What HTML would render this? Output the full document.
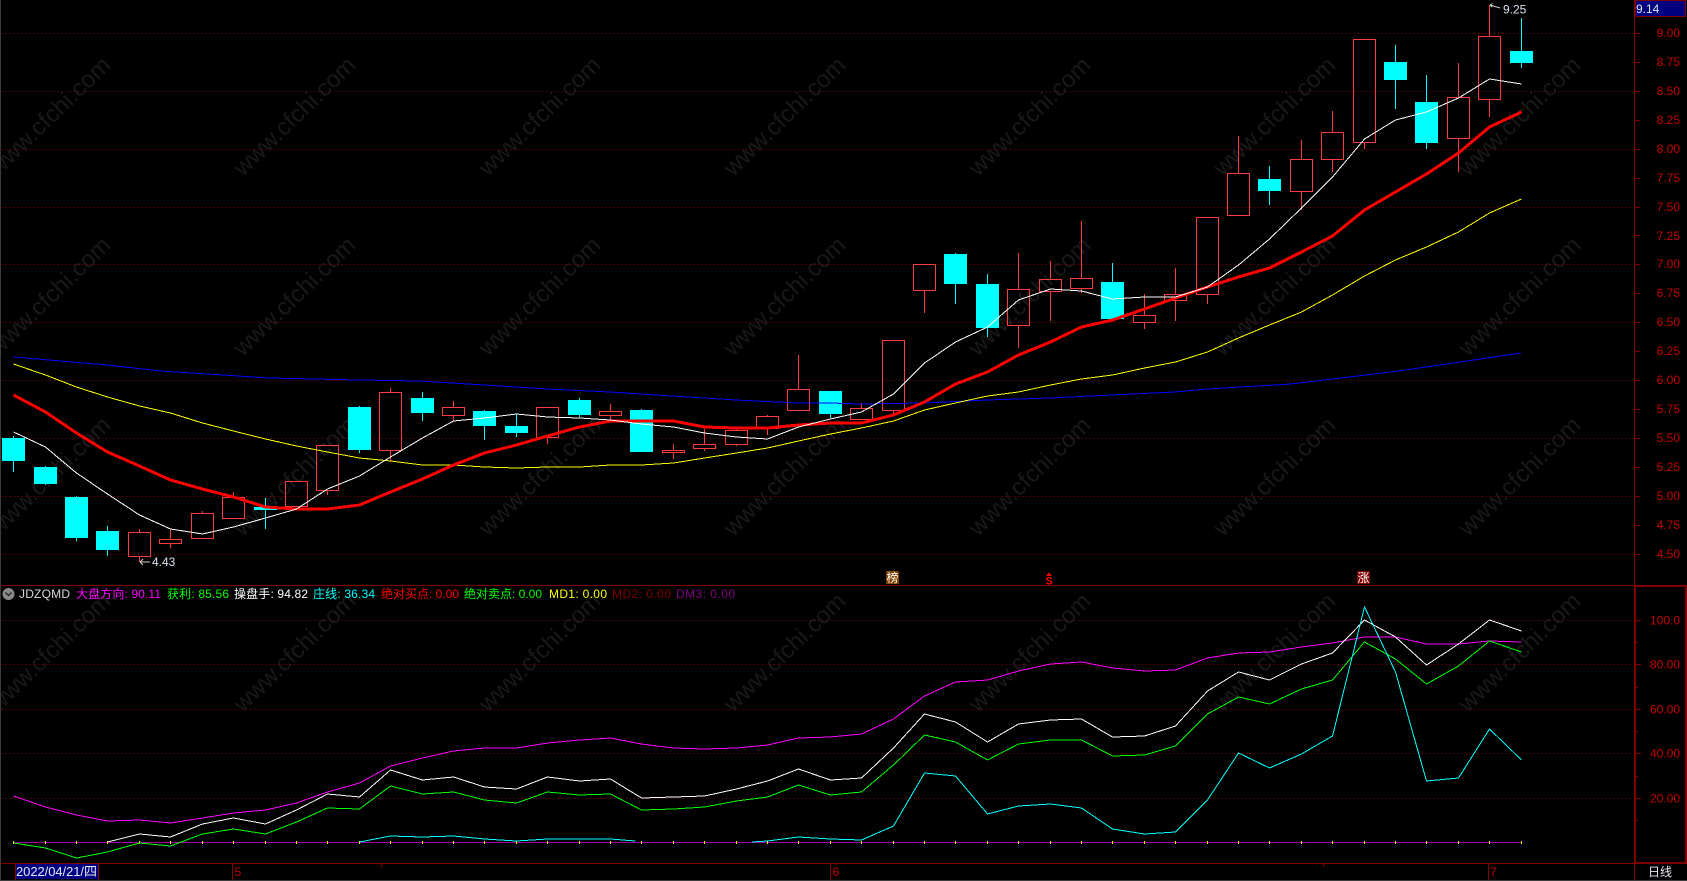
<!DOCTYPE html>
<html>
<head>
<meta charset="utf-8">
<title>JDZQMD</title>
<style>
html,body{margin:0;padding:0;background:#000;width:1687px;height:881px;overflow:hidden}
svg{display:block}
text{font-family:"Liberation Sans","Noto Sans CJK SC",sans-serif}
.wm text{font-size:24px;fill:#191919}
.ax text{font-size:12px;fill:#c40000}
.lg text{font-size:12px}
polyline{shape-rendering:crispEdges}
</style>
</head>
<body>
<svg width="1687" height="881" viewBox="0 0 1687 881" xmlns="http://www.w3.org/2000/svg">
<rect width="1687" height="881" fill="#000"/>

<!-- watermark -->
<g class="wm" text-anchor="middle">
<text transform="translate(55,122) rotate(-44)">www.cfchi.com</text>
<text transform="translate(300,122) rotate(-44)">www.cfchi.com</text>
<text transform="translate(545,122) rotate(-44)">www.cfchi.com</text>
<text transform="translate(790,122) rotate(-44)">www.cfchi.com</text>
<text transform="translate(1035,122) rotate(-44)">www.cfchi.com</text>
<text transform="translate(1280,122) rotate(-44)">www.cfchi.com</text>
<text transform="translate(1525,122) rotate(-44)">www.cfchi.com</text>
<text transform="translate(55,302) rotate(-44)">www.cfchi.com</text>
<text transform="translate(300,302) rotate(-44)">www.cfchi.com</text>
<text transform="translate(545,302) rotate(-44)">www.cfchi.com</text>
<text transform="translate(790,302) rotate(-44)">www.cfchi.com</text>
<text transform="translate(1035,302) rotate(-44)">www.cfchi.com</text>
<text transform="translate(1280,302) rotate(-44)">www.cfchi.com</text>
<text transform="translate(1525,302) rotate(-44)">www.cfchi.com</text>
<text transform="translate(55,482) rotate(-44)">www.cfchi.com</text>
<text transform="translate(300,482) rotate(-44)">www.cfchi.com</text>
<text transform="translate(545,482) rotate(-44)">www.cfchi.com</text>
<text transform="translate(790,482) rotate(-44)">www.cfchi.com</text>
<text transform="translate(1035,482) rotate(-44)">www.cfchi.com</text>
<text transform="translate(1280,482) rotate(-44)">www.cfchi.com</text>
<text transform="translate(1525,482) rotate(-44)">www.cfchi.com</text>
<text transform="translate(55,658) rotate(-44)">www.cfchi.com</text>
<text transform="translate(300,658) rotate(-44)">www.cfchi.com</text>
<text transform="translate(545,658) rotate(-44)">www.cfchi.com</text>
<text transform="translate(790,658) rotate(-44)">www.cfchi.com</text>
<text transform="translate(1035,658) rotate(-44)">www.cfchi.com</text>
<text transform="translate(1280,658) rotate(-44)">www.cfchi.com</text>
<text transform="translate(1525,658) rotate(-44)">www.cfchi.com</text>
</g>

<!-- dotted grid -->
<path d="M2 33.5H1634M2 91.5H1634M2 149.5H1634M2 207.5H1634M2 264.5H1634M2 322.5H1634M2 380.5H1634M2 438.5H1634M2 496.5H1634M2 554.5H1634M2 620.5H1634M2 664.5H1634M2 709.5H1634M2 753.5H1634M2 798.5H1634" stroke="#900000" stroke-width="1" stroke-dasharray="1 3" fill="none" shape-rendering="crispEdges"/>

<!-- frame -->
<g shape-rendering="crispEdges" fill="none" stroke="#800000" stroke-width="1">
<path d="M0 585.5H1687M0 863.5H1687M1634.5 0V881"/>
<rect x="1635" y="586" width="51" height="277" stroke-width="2"/>
<path d="M1635 33.5h5M1635 62.5h5M1635 91.5h5M1635 120.5h5M1635 149.5h5M1635 178.5h5M1635 207.5h5M1635 235.5h5M1635 264.5h5M1635 293.5h5M1635 322.5h5M1635 351.5h5M1635 380.5h5M1635 409.5h5M1635 438.5h5M1635 467.5h5M1635 496.5h5M1635 525.5h5M1635 554.5h5"/>
<path d="M1636 620.5h5M1636 642.5h2M1636 664.5h5M1636 687.5h2M1636 709.5h5M1636 731.5h2M1636 753.5h5M1636 776.5h2M1636 798.5h5M1636 820.5h2"/>
<path d="M15.5 864V880M98.5 864V880M232.5 864V880M830.5 864V880M1488.5 864V880M381.5 864v3M1323.5 864v3"/>
</g>
<path d="M0.5 0V881M0 880.5H1687" stroke="#3c3c3c" stroke-width="1" fill="none" shape-rendering="crispEdges"/>

<!-- cyan candles -->
<path shape-rendering="crispEdges" stroke="#00ffff" stroke-width="1" fill="none" d="M13.5 436V472M45.5 466V485M76.5 496V541M107.5 526V556M265.5 498V529M359.5 406V453M422.5 392V421M484.5 410V440M516.5 414V437M579.5 398V417M641.5 409V452M830.5 391V418M955.5 253V304M987.5 274V337M1112.5 263V320M1269.5 166V205M1395.5 45V109M1426.5 75V149M1521.5 18V68"/>
<path shape-rendering="crispEdges" fill="#00ffff" d="M2 438h23v23h-23zM34 467h23v17h-23zM65 497h23v41h-23zM96 531h23v19h-23zM254 507h23v3h-23zM348 407h23v43h-23zM411 398h23v15h-23zM473 411h23v15h-23zM505 426h23v7h-23zM568 400h23v15h-23zM630 410h23v42h-23zM819 391h23v23h-23zM944 254h23v30h-23zM976 284h23v44h-23zM1101 282h23v37h-23zM1258 179h23v12h-23zM1384 62h23v18h-23zM1415 102h23v41h-23zM1510 51h23v12h-23z"/>

<!-- red candles -->
<path shape-rendering="crispEdges" stroke="#ff3c3c" stroke-width="1" fill="none" d="M139.5 529V532M139.5 557V562M170.5 529V539M170.5 544V548M202.5 511V513M233.5 492V497M327.5 491V495M390.5 388V392M390.5 451V461M453.5 401V407M453.5 416V421M547.5 438V444M610.5 404V411M610.5 416V421M673.5 444V450M673.5 453V459M704.5 429V444M704.5 449V451M736.5 429V430M736.5 445V446M767.5 415V416M767.5 429V435M798.5 355V389M861.5 403V408M893.5 411V415M924.5 291V313M1018.5 253V289M1018.5 326V348M1050.5 261V279M1050.5 292V321M1081.5 221V278M1081.5 289V293M1144.5 294V315M1144.5 323V329M1175.5 268V294M1175.5 301V321M1207.5 295V304M1238.5 136V173M1301.5 140V159M1301.5 192V210M1332.5 111V132M1332.5 160V172M1364.5 143V149M1458.5 63V97M1458.5 139V172M1489.5 5V36M1489.5 100V117"/>
<path shape-rendering="crispEdges" stroke="#ff3c3c" stroke-width="1" fill="none" d="M128.5 532.5h22v24h-22zM159.5 539.5h22v4h-22zM191.5 513.5h22v25h-22zM222.5 497.5h22v21h-22zM285.5 481.5h22v25h-22zM316.5 445.5h22v45h-22zM379.5 392.5h22v58h-22zM442.5 407.5h22v8h-22zM536.5 407.5h22v30h-22zM599.5 411.5h22v4h-22zM662.5 450.5h22v2h-22zM693.5 444.5h22v4h-22zM725.5 430.5h22v14h-22zM756.5 416.5h22v12h-22zM787.5 389.5h22v21h-22zM850.5 408.5h22v11h-22zM882.5 340.5h22v70h-22zM913.5 264.5h22v26h-22zM1007.5 289.5h22v36h-22zM1039.5 279.5h22v12h-22zM1070.5 278.5h22v10h-22zM1133.5 315.5h22v7h-22zM1164.5 294.5h22v6h-22zM1196.5 217.5h22v77h-22zM1227.5 173.5h22v42h-22zM1290.5 159.5h22v32h-22zM1321.5 132.5h22v27h-22zM1353.5 39.5h22v103h-22zM1447.5 97.5h22v41h-22zM1478.5 36.5h22v63h-22z"/>

<!-- moving averages, upper pane -->
<polyline fill="none" stroke="#0000ff" stroke-width="1" points="13.5,357 107,365 161,371 269,378 359,380 420,381 484,385 547,389 610,392 673,396 736,400 798,403 830,403 861,404 924,403 987,400 1050,398 1112,395 1175,392 1207,389 1291,384 1399,371 1521,353"/>
<polyline fill="none" stroke="#ffff00" stroke-width="1" points="13.5,364 45.5,375 76.5,387 107.5,397 139.5,406 170.5,413 202.5,423 233.5,431 265.5,439 296.5,446 327.5,452 359.5,458 390.5,461 422.5,465 453.5,465 484.5,467 516.5,468 547.5,467 579.5,467 610.5,465 641.5,465 673.5,463 704.5,458 736.5,453 767.5,448 798.5,441 830.5,434 861.5,428 893.5,421 924.5,410 955.5,403 987.5,396 1018.5,392 1050.5,385 1081.5,379 1112.5,375 1144.5,368 1175.5,362 1207.5,352 1238.5,338 1269.5,325 1301.5,312 1332.5,295 1364.5,276 1395.5,260 1426.5,247 1458.5,232 1489.5,213 1521.5,199"/>
<polyline fill="none" stroke="#ff0000" stroke-width="3" points="13.5,395 45.5,412 76.5,433 107.5,452 139.5,466 170.5,480 202.5,489 233.5,497 265.5,507 296.5,509 327.5,509 359.5,505 390.5,492 422.5,479 453.5,465 484.5,453 516.5,445 547.5,436 579.5,427 610.5,421 641.5,421 673.5,421 704.5,427 736.5,428 767.5,428 798.5,425 830.5,423 861.5,423 893.5,415 924.5,402 955.5,384 987.5,372 1018.5,355 1050.5,342 1081.5,327 1112.5,320 1144.5,309 1175.5,298 1207.5,287 1238.5,277 1269.5,268 1301.5,252 1332.5,236 1364.5,210 1395.5,192 1426.5,174 1458.5,153 1489.5,127 1521.5,112"/>
<polyline fill="none" stroke="#ffffff" stroke-width="1" points="13.5,432 45.5,447 76.5,473 107.5,494 139.5,515 170.5,529 202.5,534 233.5,527 265.5,518 296.5,509 327.5,489 359.5,476 390.5,457 422.5,438 453.5,421 484.5,418 516.5,414 547.5,417 579.5,418 610.5,420 641.5,424 673.5,427 704.5,433 736.5,437 767.5,439 798.5,427 830.5,419 861.5,412 893.5,394 924.5,363 955.5,342 987.5,327 1018.5,300 1050.5,289 1081.5,291 1112.5,299 1144.5,297 1175.5,297 1207.5,287 1238.5,265 1269.5,239 1301.5,208 1332.5,177 1364.5,139 1395.5,120 1426.5,112 1458.5,98 1489.5,79 1521.5,84"/>

<!-- lower pane -->
<polyline fill="none" stroke="#a000a0" stroke-width="1" points="13.5,842.5 1521.5,842.5"/>
<path shape-rendering="crispEdges" stroke="#ffff00" stroke-width="1" fill="none" d="M13.5 841v3M45.5 841v3M76.5 841v3M107.5 841v3M139.5 841v3M170.5 841v3M202.5 841v3M233.5 841v3M265.5 841v3M296.5 841v3M327.5 841v3M359.5 841v3M390.5 841v3M422.5 841v3M453.5 841v3M484.5 841v3M516.5 841v3M547.5 841v3M579.5 841v3M610.5 841v3M641.5 841v3M673.5 841v3M704.5 841v3M736.5 841v3M767.5 841v3M798.5 841v3M830.5 841v3M861.5 841v3M893.5 841v3M924.5 841v3M955.5 841v3M987.5 841v3M1018.5 841v3M1050.5 841v3M1081.5 841v3M1112.5 841v3M1144.5 841v3M1175.5 841v3M1207.5 841v3M1238.5 841v3M1269.5 841v3M1301.5 841v3M1332.5 841v3M1364.5 841v3M1395.5 841v3M1426.5 841v3M1458.5 841v3M1489.5 841v3M1521.5 841v3"/>
<polyline fill="none" stroke="#ff00ff" stroke-width="1" points="13.5,796 45.5,807 76.5,815 107.5,821 139.5,820 170.5,823 202.5,818 233.5,813 265.5,810 296.5,803 327.5,792 359.5,783 390.5,766 422.5,758 453.5,751 484.5,748 516.5,748 547.5,743 579.5,740 610.5,738 641.5,744 673.5,748 704.5,749 736.5,748 767.5,745 798.5,738 830.5,737 861.5,734 893.5,719 924.5,696 955.5,682 987.5,680 1018.5,671 1050.5,664 1081.5,662 1112.5,668 1144.5,671 1175.5,670 1207.5,658 1238.5,653 1269.5,652 1301.5,647 1332.5,643 1364.5,637 1395.5,637 1426.5,644 1458.5,644 1489.5,641 1521.5,642"/>
<polyline fill="none" stroke="#ffffff" stroke-width="1" points="107.5,842 139.5,834 170.5,837 202.5,824 233.5,818 265.5,824 296.5,810 327.5,794 359.5,797 390.5,770 422.5,780 453.5,777 484.5,787 516.5,789 547.5,777 579.5,781 610.5,779 641.5,798 673.5,797 704.5,796 736.5,789 767.5,781 798.5,769 830.5,780 861.5,778 893.5,748 924.5,714 955.5,722 987.5,742 1018.5,724 1050.5,720 1081.5,719 1112.5,737 1144.5,736 1175.5,726 1207.5,691 1238.5,672 1269.5,680 1301.5,664 1332.5,653 1364.5,620 1395.5,637 1426.5,665 1458.5,644 1489.5,620 1521.5,631"/>
<polyline fill="none" stroke="#00ff00" stroke-width="1" points="13.5,843 45.5,848 76.5,858 107.5,852 139.5,843 170.5,846 202.5,834 233.5,829 265.5,834 296.5,822 327.5,808 359.5,809 390.5,786 422.5,794 453.5,792 484.5,800 516.5,803 547.5,792 579.5,795 610.5,794 641.5,810 673.5,809 704.5,807 736.5,801 767.5,797 798.5,785 830.5,795 861.5,792 893.5,765 924.5,735 955.5,742 987.5,760 1018.5,744 1050.5,740 1081.5,740 1112.5,756 1144.5,755 1175.5,746 1207.5,714 1238.5,697 1269.5,704 1301.5,689 1332.5,680 1364.5,642 1395.5,659 1426.5,684 1458.5,666 1489.5,641 1521.5,652"/>
<polyline fill="none" stroke="#00ffff" stroke-width="1" points="359.5,842 390.5,836 422.5,837 453.5,836 484.5,839 516.5,841 547.5,839 579.5,839 610.5,839 635.5,841"/>
<polyline fill="none" stroke="#00ffff" stroke-width="1" points="752,842 767.5,841 798.5,837 830.5,839 861.5,840 893.5,826 924.5,773 955.5,776 987.5,814 1018.5,806 1050.5,804 1081.5,808 1112.5,829 1144.5,834 1175.5,832 1207.5,800 1238.5,753 1269.5,768 1301.5,754 1332.5,736 1364.5,607 1395.5,672 1426.5,781 1458.5,778 1489.5,729 1521.5,760"/>

<!-- upper pane price axis -->
<g class="ax" text-anchor="end">
<text x="1680" y="37">9.00</text><text x="1680" y="66">8.75</text><text x="1680" y="95">8.50</text><text x="1680" y="124">8.25</text><text x="1680" y="153">8.00</text><text x="1680" y="182">7.75</text><text x="1680" y="211">7.50</text><text x="1680" y="240">7.25</text><text x="1680" y="268">7.00</text><text x="1680" y="297">6.75</text><text x="1680" y="326">6.50</text><text x="1680" y="355">6.25</text><text x="1680" y="384">6.00</text><text x="1680" y="413">5.75</text><text x="1680" y="442">5.50</text><text x="1680" y="471">5.25</text><text x="1680" y="500">5.00</text><text x="1680" y="529">4.75</text><text x="1680" y="558">4.50</text>
<text x="1680" y="624.5">100.0</text><text x="1680" y="668.5">80.00</text><text x="1680" y="713.5">60.00</text><text x="1680" y="757.5">40.00</text><text x="1680" y="802.5">20.00</text>
</g>

<!-- current price tag -->
<rect x="1635.5" y="0.5" width="50" height="16" fill="#000080" stroke="#800000" shape-rendering="crispEdges"/>
<text x="1636" y="13" font-size="12" fill="#e4e8f4">9.14</text>

<!-- high / low labels -->
<path d="M1490 5L1500 8M1490 5l2.5-1.5M1490 5l2 2" stroke="#d0d0d0" stroke-width="1" fill="none"/>
<text x="1503" y="13.5" font-size="12" fill="#d8e0f0">9.25</text>
<path d="M150 562H140M140 562l3-3M140 562l3 3" stroke="#d0d0d0" stroke-width="1" fill="none"/>
<text x="152" y="566" font-size="12" fill="#d8e0f0">4.43</text>

<!-- signal markers -->
<rect x="886" y="571" width="13" height="13" fill="#804000" shape-rendering="crispEdges"/>
<text x="886.5" y="582" font-size="12" fill="#ffffff">榜</text>
<path d="M1049 572.5l3 3.5h-6z" fill="#ff0000"/>
<text x="1049" y="584.5" font-size="11" font-weight="bold" fill="#ff0000" text-anchor="middle">S</text>
<rect x="1357" y="571" width="13" height="13" fill="#800000" shape-rendering="crispEdges"/>
<text x="1357.5" y="582" font-size="12" fill="#ffffff">涨</text>

<!-- legend -->
<circle cx="8.5" cy="594" r="6" fill="#8a8a8a"/>
<path d="M5.5 592.5l3 3 3-3" stroke="#222" stroke-width="1.3" fill="none"/>
<g class="lg">
<text x="19" y="598" fill="#d8d8d8" textLength="51">JDZQMD</text>
<text x="76" y="598" fill="#ff00ff" textLength="85">大盘方向: 90.11</text>
<text x="167" y="598" fill="#00ff00" textLength="62">获利: 85.56</text>
<text x="234" y="598" fill="#ffffff" textLength="74">操盘手: 94.82</text>
<text x="313" y="598" fill="#00ffff" textLength="62">庄线: 36.34</text>
<text x="381" y="598" fill="#ff0000" textLength="78">绝对买点: 0.00</text>
<text x="464" y="598" fill="#00ff00" textLength="78">绝对卖点: 0.00</text>
<text x="549" y="598" fill="#ffff00" textLength="58">MD1: 0.00</text>
<text x="612" y="598" fill="#800000" textLength="59">MD2: 0.00</text>
<text x="676" y="598" fill="#800080" textLength="59">DM3: 0.00</text>
</g>

<!-- time axis -->
<rect x="16" y="864" width="82" height="15" fill="#000080" shape-rendering="crispEdges"/>
<text x="16" y="876" font-size="13" fill="#e4e8f4" textLength="81">2022/04/21/四</text>
<text x="234.5" y="876" font-size="12" fill="#c40000">5</text>
<text x="832.5" y="876" font-size="12" fill="#c40000">6</text>
<text x="1490" y="876" font-size="12" fill="#c40000">7</text>
<text x="1648" y="876" font-size="12" fill="#e4e8f4">日线</text>
</svg>
</body>
</html>
